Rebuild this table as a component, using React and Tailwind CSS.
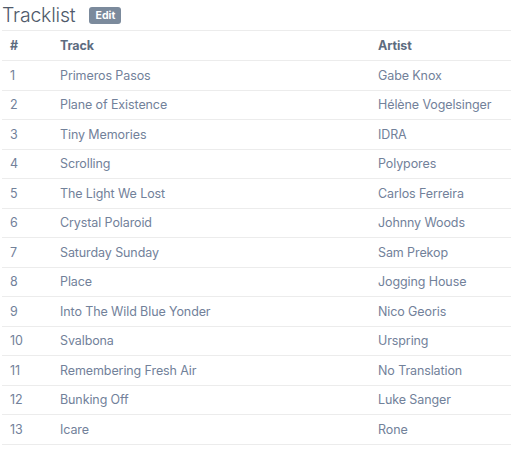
import React from "react";

const rows = [
  ["1", "Primeros Pasos", "Gabe Knox"],
  ["2", "Plane of Existence", "Hélène Vogelsinger"],
  ["3", "Tiny Memories", "IDRA"],
  ["4", "Scrolling", "Polypores"],
  ["5", "The Light We Lost", "Carlos Ferreira"],
  ["6", "Crystal Polaroid", "Johnny Woods"],
  ["7", "Saturday Sunday", "Sam Prekop"],
  ["8", "Place", "Jogging House"],
  ["9", "Into The Wild Blue Yonder", "Nico Georis"],
  ["10", "Svalbona", "Urspring"],
  ["11", "Remembering Fresh Air", "No Translation"],
  ["12", "Bunking Off", "Luke Sanger"],
  ["13", "Icare", "Rone"],
];

export default function App() {
  return (
    <div className="bg-white w-[511px] h-[450px] pl-[2px] font-['Inter',sans-serif] text-[#72819a]">
      <div className="flex items-center h-[30px] gap-[14px] pt-[1px]">
        <h1 className="text-[19.5px] leading-none font-light text-[#4f5a6a] tracking-[-0.2px]">Tracklist</h1>
        <span className="bg-[#7b8a9c] text-white text-[10.5px] font-bold rounded-[3px] w-[32px] justify-center h-[17px] flex items-center">Edit</span>
      </div>
      <table className="w-[509px] border-collapse text-[12.5px] table-fixed tracking-[-0.1px]">
        <colgroup>
          <col className="w-[58px]" />
          <col className="w-[318px]" />
          <col />
        </colgroup>
        <thead>
          <tr className="h-[30px] border-t border-b border-[#ececec]">
            <th className="text-left font-bold text-[#5d6c80] pl-[8px] pt-[2px]">#</th>
            <th className="text-left font-bold text-[#5d6c80] pt-[2px]">Track</th>
            <th className="text-left font-bold text-[#5d6c80] pt-[2px]">Artist</th>
          </tr>
        </thead>
        <tbody>
          {rows.map(([n, t, a]) => (
            <tr key={n} className="h-[29.5px] border-b border-[#ececec]">
              <td className="pl-[8px] pt-[2px]">{n}</td>
              <td className="pt-[2px]">{t}</td>
              <td className="pt-[2px]">{a}</td>
            </tr>
          ))}
        </tbody>
      </table>
    </div>
  );
}
